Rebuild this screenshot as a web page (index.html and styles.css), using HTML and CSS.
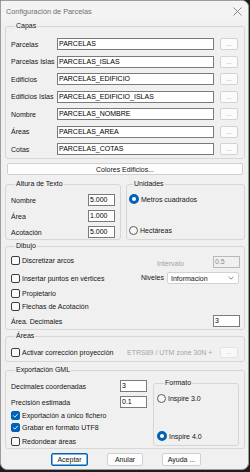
FILE: index.html
```html
<!DOCTYPE html>
<html>

<head>
    <title>Configuración de Parcelas</title>
    <meta charset="UTF-8">
    <link rel="stylesheet" href="styles.css">
</head>

<body>
    <div class="window">
        <div class="titlebar">
            <span class="title">Configuración de Parcelas</span>
            <svg class="close" width="9" height="9" viewBox="0 0 9 9">
                <path d="M0.5 0.5 L8.5 8.5 M8.5 0.5 L0.5 8.5" stroke="#6f6f6f" stroke-width="0.8" fill="none"/>
            </svg>
        </div>

        <div class="content">
            <fieldset class="group capas">
                <legend>Capas</legend>
                <div class="layer-row"><label>Parcelas</label><span class="tb layer">PARCELAS</span><button class="dots">...</button></div>
                <div class="layer-row"><label>Parcelas Islas</label><span class="tb layer">PARCELAS_ISLAS</span><button class="dots">...</button></div>
                <div class="layer-row"><label>Edificios</label><span class="tb layer">PARCELAS_EDIFICIO</span><button class="dots">...</button></div>
                <div class="layer-row"><label>Edificios Islas</label><span class="tb layer">PARCELAS_EDIFICIO_ISLAS</span><button class="dots">...</button></div>
                <div class="layer-row"><label>Nombre</label><span class="tb layer">PARCELAS_NOMBRE</span><button class="dots">...</button></div>
                <div class="layer-row"><label>Áreas</label><span class="tb layer">PARCELAS_AREA</span><button class="dots">...</button></div>
                <div class="layer-row"><label>Cotas</label><span class="tb layer">PARCELAS_COTAS</span><button class="dots">...</button></div>
            </fieldset>

            <button class="btn wide">Colores Edificios...</button>

            <div class="split">
                <fieldset class="group altura">
                    <legend>Altura de Texto</legend>
                    <div class="num-row"><label>Nombre</label><span class="tb num">5.000</span></div>
                    <div class="num-row"><label>Área</label><span class="tb num">1.000</span></div>
                    <div class="num-row"><label>Acotación</label><span class="tb num">5.000</span></div>
                </fieldset>
                <fieldset class="group unidades">
                    <legend>Unidades</legend>
                    <div class="radio-row"><span class="radio on"></span>Metros cuadrados</div>
                    <div class="radio-row last"><span class="radio"></span>Hectáreas</div>
                </fieldset>
            </div>

            <fieldset class="group dibujo">
                <legend>Dibujo</legend>
                <div class="opt-row r1">
                    <span class="check"><span class="box"></span>Discretizar arcos</span>
                    <span class="aux intervalo">Intervalo</span>
                    <span class="tb num off">0.5</span>
                </div>
                <div class="opt-row r2">
                    <span class="check"><span class="box"></span>Insertar puntos en vértices</span>
                    <span class="aux niveles">Niveles</span>
                    <div class="select">
                        <span>Informacion</span>
                        <svg width="6" height="4" viewBox="0 0 6 4"><path d="M0.5 0.8 L3 3.2 L5.5 0.8" stroke="#555" stroke-width="0.7" fill="none"/></svg>
                    </div>
                </div>
                <div class="opt-row r3"><span class="check"><span class="box"></span>Propietario</span></div>
                <div class="opt-row r4"><span class="check"><span class="box"></span>Flechas de Acotación</span></div>
                <div class="opt-row r5">
                    <span class="plain">Área. Decimales</span>
                    <span class="tb num">3</span>
                </div>
            </fieldset>

            <fieldset class="group areas">
                <legend>Áreas</legend>
                <div class="opt-row">
                    <span class="check"><span class="box"></span>Activar corrección proyección</span>
                    <span class="crs">ETRS89 / UTM zone 30N +</span>
                    <button class="dots off">...</button>
                </div>
            </fieldset>

            <fieldset class="group export">
                <legend>Exportación GML</legend>
                <div class="export-body">
                    <div class="export-left">
                        <div class="num-row"><label>Decimales coordenadas</label><span class="tb num">3</span></div>
                        <div class="num-row second"><label>Precisión estimada</label><span class="tb num">0.1</span></div>
                        <div class="opt-row e1"><span class="check"><span class="box on"><svg width="7" height="7" viewBox="0 0 7 7"><path d="M1.3 3.6 L2.9 5.1 L5.8 1.9" stroke="#fff" stroke-width="0.9" fill="none"/></svg></span>Exportación a único fichero</span></div>
                        <div class="opt-row e2"><span class="check"><span class="box on"><svg width="7" height="7" viewBox="0 0 7 7"><path d="M1.3 3.6 L2.9 5.1 L5.8 1.9" stroke="#fff" stroke-width="0.9" fill="none"/></svg></span>Grabar en formato UTF8</span></div>
                        <div class="opt-row e3"><span class="check"><span class="box"></span>Redondear áreas</span></div>
                    </div>
                    <fieldset class="group formato">
                        <legend>Formato</legend>
                        <div class="radio-row"><span class="radio"></span>Inspire 3.0</div>
                        <div class="radio-row last"><span class="radio on"></span>Inspire 4.0</div>
                    </fieldset>
                </div>
            </fieldset>

            <div class="actions">
                <button class="btn default">Aceptar</button>
                <button class="btn anular">Anular</button>
                <button class="btn ayuda">Ayuda ...</button>
            </div>
        </div>
    </div>
</body>

</html>
```

FILE: styles.css
```css
* {
    margin: 0;
    padding: 0;
    box-sizing: border-box;
}

body {
    width: 250px;
    height: 472px;
    overflow: hidden;
    background: #1e1e1e;
    font-family: "Liberation Sans", Arial, sans-serif;
    font-size: 7px;
    color: #141414;
}

.window {
    width: 249px;
    height: 470px;
    background: #f0f0f0;
    border: 1px solid #9c9c9c;
    border-radius: 0 7px 7px 7px;
    overflow: hidden;
}

.titlebar {
    height: 20px;
    display: flex;
    align-items: center;
    justify-content: space-between;
    padding: 0 6px 0 5px;
    background: #f3f3f3;
}

.title {
    font-size: 7.3px;
    color: #6e6e6e;
}

.content {
    padding: 0 3px 0 4px;
}

/* group boxes */
.group {
    border: 1px solid #d6d6d6;
    border-radius: 3px;
    min-width: 0;
}

.group legend {
    margin-left: 4px;
    padding: 0 1px;
    line-height: 10px;
}

.capas {
    padding: 7px 5px 3px 5px;
}

.layer-row {
    display: flex;
    align-items: center;
    height: 12px;
}

.layer-row + .layer-row {
    margin-top: 5.5px;
}

.layer-row label {
    width: 46px;
    flex: none;
}

/* text boxes */
.tb {
    display: block;
    height: 12px;
    border: 1px solid #7a7a7a;
    background: #fff;
    line-height: 9px;
    padding: 0 1px;
    color: #000;
    white-space: nowrap;
    overflow: hidden;
}

.layer {
    width: 157px;
}

.num {
    width: 27px;
    flex: none;
}

.tb.off {
    background: #f0f0f0;
    border-color: #b9b9b9;
    color: #8c8c8c;
}

.dots {
    width: 18px;
    height: 12px;
    margin-left: 6px;
    border: 1px solid #d3d3d3;
    border-radius: 2px;
    background: #fbfbfb;
    font-family: inherit;
    font-size: 6px;
    color: #777;
    line-height: 8px;
}

.dots.off {
    height: 11px;
    margin-left: 0;
    border-color: #e3e3e3;
    color: #c4c4c4;
    background: #f8f8f8;
}

.btn {
    height: 13px;
    border: 1px solid #d0d0d0;
    border-radius: 2px;
    background: #fdfdfd;
    font-family: inherit;
    font-size: 7px;
    color: #141414;
}

.wide {
    display: block;
    width: 236px;
    height: 12px;
    margin: 4px 0 0 2px;
}

.split {
    display: flex;
    gap: 5px;
    margin-top: 4px;
}

.altura {
    width: 116px;
    padding: 5px 5px 1px 5px;
}

.num-row {
    display: flex;
    align-items: center;
    justify-content: space-between;
    height: 12px;
}

.altura .num-row + .num-row {
    margin-top: 4px;
}

.unidades {
    width: 119px;
    padding: 4px 2px 0 2px;
}

.radio-row {
    display: flex;
    align-items: center;
    height: 12px;
    gap: 2px;
}

.unidades .last {
    margin-top: 19px;
}

.radio {
    width: 9px;
    height: 9px;
    border-radius: 50%;
    border: 1px solid #5a5a5a;
    background: #f7f7f7;
    flex: none;
}

.radio.on {
    width: 10px;
    height: 10px;
    border: 3px solid #0063b8;
    background: #fff;
}

.dibujo {
    margin-top: 1px;
    padding: 5px 4px 2px 5px;
}

.opt-row {
    display: flex;
    align-items: center;
    height: 12px;
}

.check {
    display: flex;
    align-items: center;
    gap: 2px;
    flex: 1;
}

.box {
    width: 9px;
    height: 9px;
    border: 1px solid #3c3c3c;
    border-radius: 2px;
    background: #fafafa;
    flex: none;
    display: flex;
    align-items: center;
    justify-content: center;
}

.box.on {
    background: #0063b8;
    border-color: #0063b8;
}

.aux {
    flex: none;
}

.intervalo {
    width: 56px;
    color: #a2a2a2;
    padding-top: 3px;
}

.r1 .check {
    margin-top: -3px;
}

.r2 {
    margin-top: 4px;
}

.niveles {
    width: 26px;
    margin-top: -2px;
}

.select {
    width: 72px;
    height: 12px;
    margin-right: 1px;
    display: flex;
    align-items: center;
    justify-content: space-between;
    padding: 0 4px 0 3px;
    background: #fff;
    border: 1px solid #d2d2d2;
    border-radius: 2px;
}

.r3 {
    margin-top: 3px;
}

.r4 {
    margin-top: 1px;
}

.r5 {
    margin-top: 3px;
}

.plain {
    flex: 1;
}

.areas {
    margin-top: 1px;
    padding: 5px 6px 3px 5px;
}

.crs {
    width: 93px;
    color: #a6a6a6;
    flex: none;
}

.export {
    margin-top: 3px;
    padding: 3px 5px 1px 5px;
}

.export-body {
    display: flex;
    gap: 5px;
}

.export-left {
    width: 137px;
    padding-top: 2px;
}

.export-left .num-row {
    padding-right: 1px;
}

.export-left .second {
    margin-top: 4px;
}

.e1 {
    margin-top: 1px;
}

.e3 {
    margin-top: 2px;
}

.formato {
    width: 86px;
    height: 68px;
    padding: 4px 3px 0 3px;
}

.formato legend {
    margin-left: 7px;
}

.formato .last {
    margin-top: 26px;
}

.actions {
    display: flex;
    justify-content: center;
    gap: 19px;
    margin-top: 4px;
    padding-left: 2px;
}

.default {
    width: 37px;
    border-color: #0063b8;
    box-shadow: inset 0 0 0 0.5px #0063b8;
}

.anular {
    width: 36px;
}

.ayuda {
    width: 39px;
}
```
